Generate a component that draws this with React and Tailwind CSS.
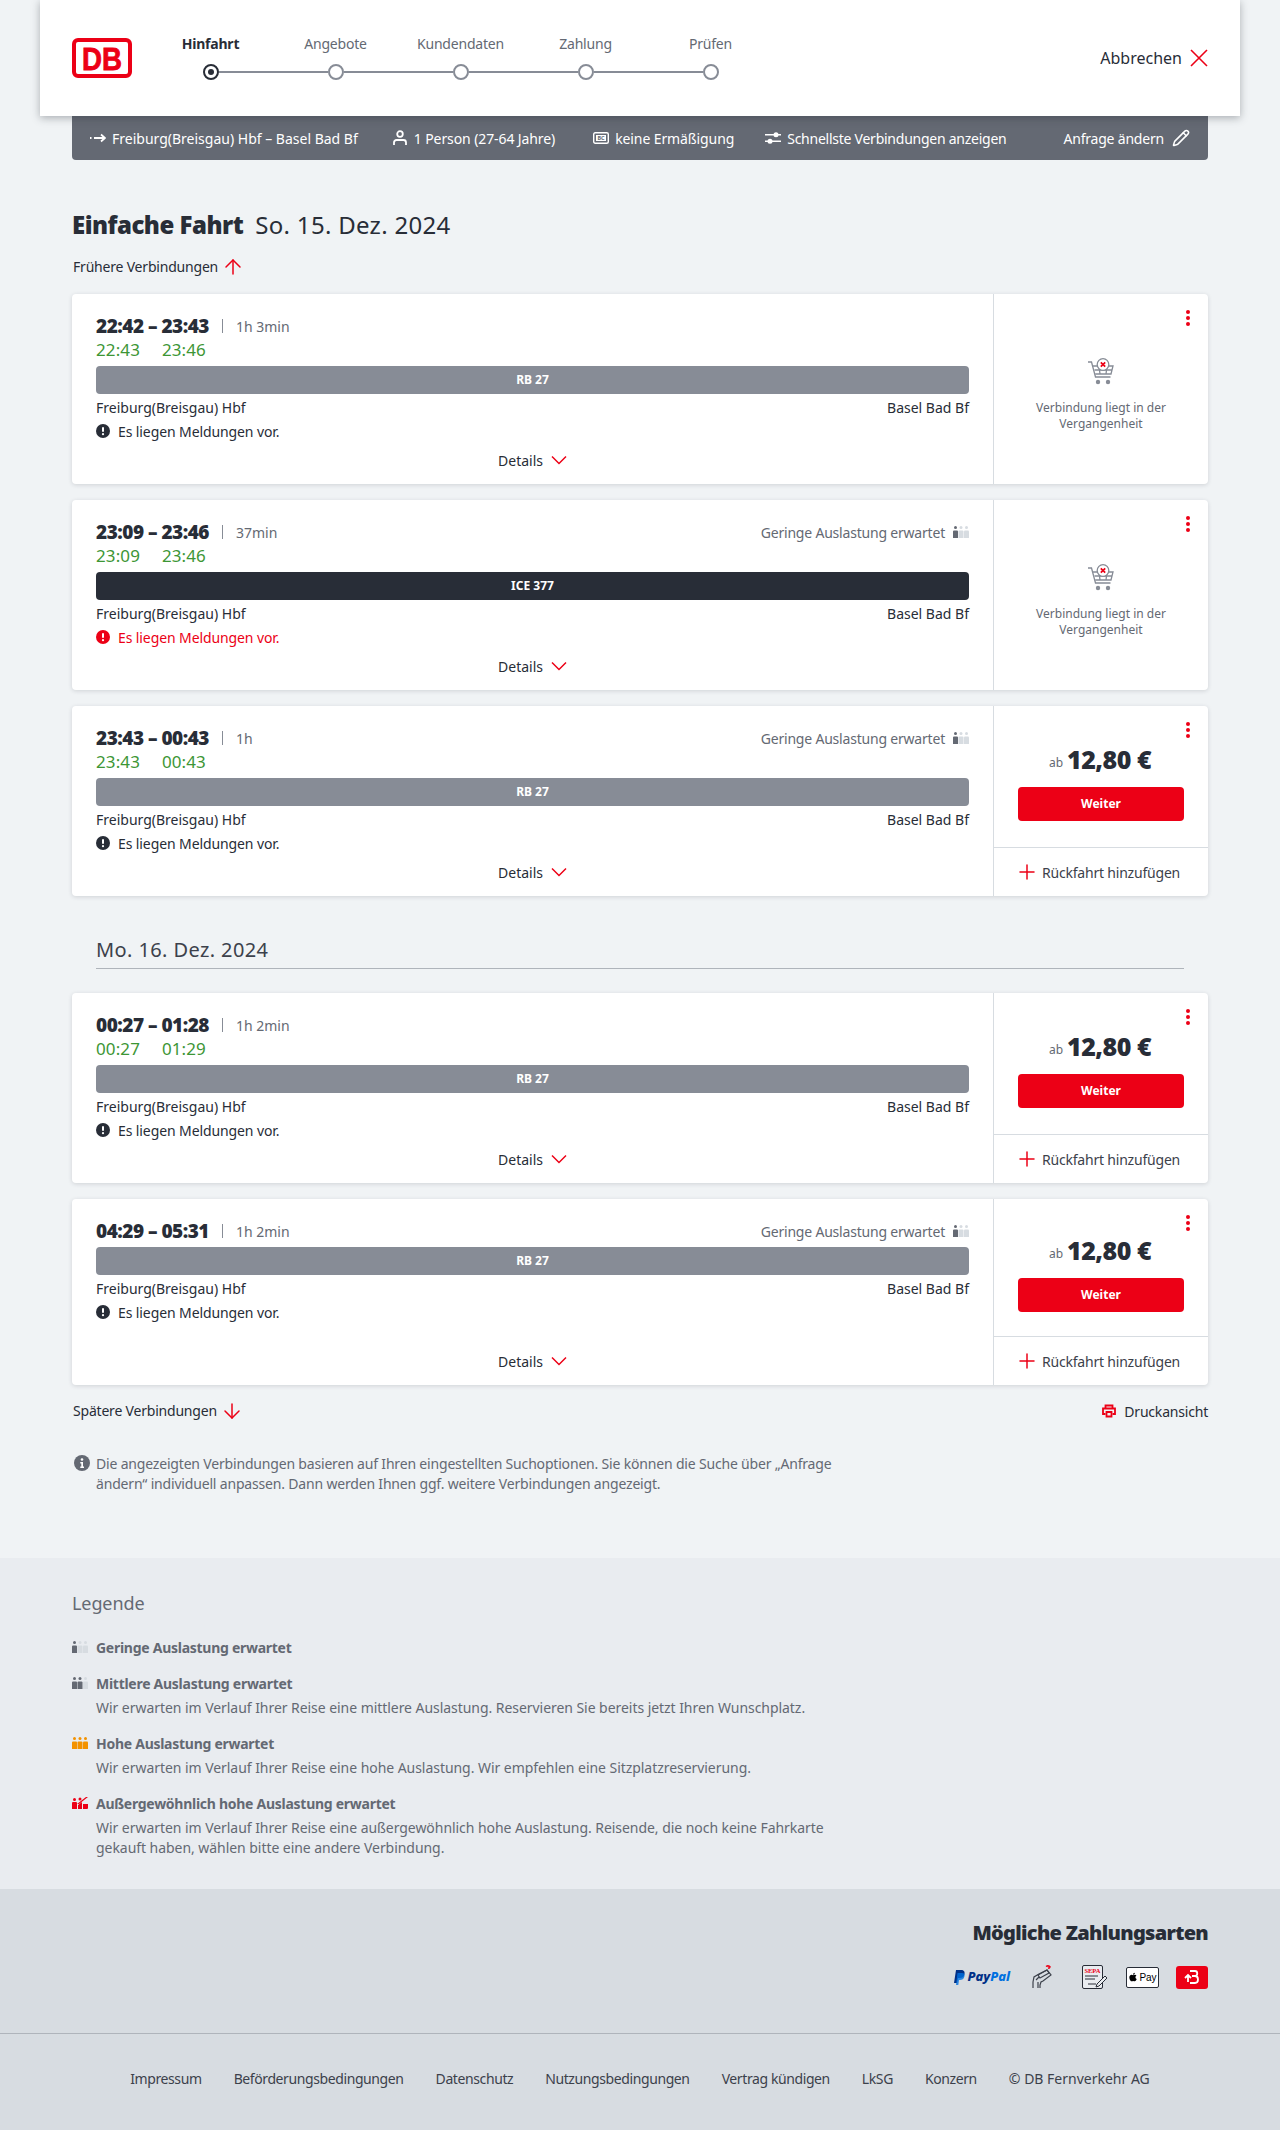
import React from 'react';
import { ArrowUp, ArrowDown, Pencil, Plus } from 'lucide-react';
import { FaApple } from 'react-icons/fa';

const steps = ['Hinfahrt', 'Angebote', 'Kundendaten', 'Zahlung', 'Prüfen'];

const DbLogo = () => (
  <svg width="60" height="40" viewBox="0 0 60 40">
    <rect x="2" y="2" width="56" height="36" rx="4" fill="#fff" stroke="#ec0016" strokeWidth="4" />
    <text x="30" y="31.500" textAnchor="middle" fontFamily="Liberation Sans" fontWeight="700" fontSize="32" fill="#ec0016" stroke="#ec0016" strokeWidth="0.800" textLength="40" lengthAdjust="spacingAndGlyphs">DB</text>
  </svg>
);

const Chevron = () => (
  <svg width="16" height="10" viewBox="0 0 16 10" fill="none" stroke="#ec0016" strokeWidth="1.5">
    <path d="M1 1.5 8 8.5 15 1.5" />
  </svg>
);

const Occupancy = ({ colors }) => (
  <svg width="16" height="12" viewBox="0 0 16 12">
    {colors.map((c, i) => (
      <g key={i} fill={c}>
        <circle cx={2.5 + i * 5.5} cy="1.5" r="1.5" />
        <path d={`M${i * 5.5} 5.5a1 1 0 0 1 1-1h3a1 1 0 0 1 1 1V12H${i * 5.5}z`} />
      </g>
    ))}
  </svg>
);

const LOW = ['#646973', '#d7dce1', '#d7dce1'];
const MID = ['#646973', '#646973', '#d7dce1'];
const HIGH = ['#f39200', '#f39200', '#f39200'];

const Overbooked = () => (
  <svg width="16" height="12" viewBox="0 0 16 12">
    <g fill="#ec0016">
      <circle cx="2.5" cy="2.5" r="1.5" />
      <path d="M0 6a1 1 0 0 1 1-1h3a1 1 0 0 1 1 1v6H0z" />
      <path d="M6 12V8l4-3v7zM11 12V7h5v4a1 1 0 0 1-1 1z" />
      <path d="M14 0h2L7 7H5z" />
      <circle cx="8" cy="2" r="1.5" />
    </g>
  </svg>
);

const Cart = () => (
  <svg width="28" height="28" viewBox="0 0 28 28" fill="none" stroke="#878c96" strokeWidth="1.300">
    <path d="M1 4h3.500l4 15h15" />
    <path d="M6 8h20l-2 8H8.200M7.500 12h17.500M12 8l1 8M20 8l-1 8" />
    <circle cx="16" cy="6.500" r="5.800" fill="#fff" />
    <path d="M13.800 4.300l4.400 4.400M18.200 4.300l-4.400 4.400" stroke="#ec0016" strokeWidth="1.700" />
    <circle cx="11" cy="24" r="2.200" fill="#878c96" stroke="none" />
    <circle cx="21" cy="24" r="2.200" fill="#878c96" stroke="none" />
  </svg>
);

const Notice = ({ red }) => (
  <svg width="14" height="14" viewBox="0 0 14 14">
    <circle cx="7" cy="7" r="7" fill={red ? '#ec0016' : '#282d37'} />
    <rect x="6" y="3" width="2" height="5" rx="1" fill="#fff" />
    <circle cx="7" cy="10.200" r="1.100" fill="#fff" />
  </svg>
);

const Dots = () => (
  <div className="absolute top-[16px] right-[18px] flex flex-col gap-[2px]">
    <span className="w-[4px] h-[4px] rounded-full bg-[#ec0016]" />
    <span className="w-[4px] h-[4px] rounded-full bg-[#ec0016]" />
    <span className="w-[4px] h-[4px] rounded-full bg-[#ec0016]" />
  </div>
);

const Card = ({ time, duration, live, train, dark, occupancy, redNotice, past }) => (
  <div className="flex rounded bg-white shadow-[0_1px_4px_rgba(40,45,55,0.16)]">
    {/* Left part */}
    <div className="w-[922px] flex flex-col border-r border-[#d7dce1] px-[24px] pt-[20px] pb-[10px]">
      <div className="flex items-center h-[24px]">
        <span className="text-[19px] font-black tracking-[-0.5px] text-[#282d37]">{time}</span>
        <span className="ml-[13px] w-px h-[14px] bg-[#878c96]" />
        <span className="ml-[13px] text-[14px] text-[#646973]">{duration}</span>
        {occupancy && (
          <div className="ml-auto flex items-center gap-[8px]">
            <span className="text-[14px] tracking-[-0.2px] text-[#646973]">Geringe Auslastung erwartet</span>
            <Occupancy colors={LOW} />
          </div>
        )}
      </div>
      {live && (
        <div className="flex h-[24px] items-center gap-[22px] text-[17px] tracking-[0.1px] text-[#3d9635]">
          <span>{live[0]}</span>
          <span>{live[1]}</span>
        </div>
      )}
      <div className={`mt-[4px] h-[28px] rounded flex items-center justify-center text-[12px] font-bold text-white ${dark ? 'bg-[#282d37]' : 'bg-[#878c96]'}`}>
        {train}
      </div>
      <div className="mt-[2px] mb-[2px] flex h-[22px] items-center justify-between text-[14px] text-[#282d37]">
        <span>Freiburg(Breisgau) Hbf</span>
        <span>Basel Bad Bf</span>
      </div>
      <div className={`mb-[2px] flex h-[22px] items-center gap-[8px] text-[14px] tracking-[-0.1px] ${redNotice ? 'text-[#ec0016]' : 'text-[#282d37]'}`}>
        <Notice red={redNotice} />
        <span>Es liegen Meldungen vor.</span>
      </div>
      <div className="mt-auto pt-[4px] pb-[2px]">
        <div className="flex h-[24px] items-center justify-center gap-[8px] text-[14px] text-[#282d37]">
          <span>Details</span>
          <Chevron />
        </div>
      </div>
    </div>

    {/* Right part */}
    <div className="relative w-[214px] flex flex-col">
      <Dots />
      {past ? (
        <div className="flex-1 flex flex-col items-center pt-[64px]">
          <Cart />
          <p className="mt-[14px] w-[160px] text-center text-[12px] leading-[16px] text-[#646973]">Verbindung liegt in der Vergangenheit</p>
        </div>
      ) : (
        <>
          <div className="flex-1 flex flex-col justify-center px-[24px] py-[24px]">
            <div className="h-[55px] flex items-center justify-center gap-[4px] pr-[2px]">
              <span className="mt-[6px] text-[12px] text-[#646973]">ab</span>
              <span className="text-[25px] font-black tracking-[-0.5px] text-[#282d37]">12,80 €</span>
            </div>
            <div className="h-[34px] rounded bg-[#ec0016] flex items-center justify-center text-[12px] font-bold text-white">Weiter</div>
          </div>
          <div className="h-[49px] border-t border-[#d7dce1] flex items-center justify-center gap-[3px] pr-[7px] text-[14px] tracking-[-0.2px] text-[#3c414b]">
            <Plus size={24} strokeWidth={1.5} color="#ec0016" />
            <span>Rückfahrt hinzufügen</span>
          </div>
        </>
      )}
    </div>
  </div>
);

const LegendItem = ({ icon, title, children }) => (
  <div>
    <div className="mb-[2px] flex items-center h-[22px] gap-[8px] text-[14px] font-bold tracking-[-0.27px] text-[#646973]">
      <span className="w-[16px] flex">{icon}</span>
      <span>{title}</span>
    </div>
    {children && <p className="mt-[4px] pl-[24px] text-[14px] leading-[20px] tracking-[-0.05px] text-[#646973]">{children}</p>}
  </div>
);

export default function App() {
  return (
    <div className="min-h-[2130px] bg-[#f0f3f5] font-['Noto_Sans',sans-serif] text-[#282d37]">
      {/* Header */}
      <header className="relative z-10 mx-[40px] h-[116px] bg-white px-[32px] flex items-center shadow-[0_2px_8px_rgba(40,45,55,0.35)]">
        <DbLogo />
        <div className="ml-[16px] flex">
          {steps.map((s, i) => (
            <div key={s} className="w-[125px] -mt-[2px]">
              <div className={`text-center text-[14px] h-[20px] leading-[20px] tracking-[-0.2px] ${i === 0 ? 'font-bold text-[#282d37]' : 'text-[#646973]'}`}>{s}</div>
              <div className="mt-[10px] flex items-center">
                <span className={`flex-1 h-[2px] ${i === 0 ? '' : 'bg-[#878c96]'}`} />
                <span className={`w-[16px] h-[16px] rounded-full border-2 bg-white flex items-center justify-center ${i === 0 ? 'border-[#282d37]' : 'border-[#878c96]'}`}>
                  {i === 0 && <span className="w-[6px] h-[6px] rounded-full bg-[#282d37]" />}
                </span>
                <span className={`flex-1 h-[2px] ${i === 4 ? '' : 'bg-[#878c96]'}`} />
              </div>
            </div>
          ))}
        </div>
        <div className="ml-auto flex items-center gap-[8px] text-[16px] text-[#282d37]">
          <span>Abbrechen</span>
          <svg width="18" height="18" viewBox="0 0 18 18" fill="none" stroke="#ec0016" strokeWidth="1.600">
            <path d="M1 1l16 16M17 1L1 17" />
          </svg>
        </div>
      </header>

      {/* Search summary */}
      <div className="mx-[72px] h-[44px] rounded-b bg-[#646973] px-[18px] flex items-center text-[14px] text-white">
        <svg width="16" height="10" viewBox="0 0 16 10" fill="none" stroke="#fff" strokeWidth="1.800">
          <path d="M0 5h1.500M4 5h11M11 1.500 15 5l-4 3.500" />
        </svg>
        <span className="ml-[6px]">Freiburg(Breisgau) Hbf – Basel Bad Bf</span>
        <svg className="ml-[34px]" width="16" height="16" viewBox="0 0 16 16" fill="none" stroke="#fff" strokeWidth="1.800">
          <circle cx="8" cy="4" r="2.800" />
          <path d="M2 15v-2.500A2.500 2.500 0 0 1 4.500 10h7A2.500 2.500 0 0 1 14 12.500V15" />
        </svg>
        <span className="ml-[6px] tracking-[-0.1px]">1 Person (27-64 Jahre)</span>
        <svg className="ml-[38px]" width="16" height="12" viewBox="0 0 16 12">
          <rect x="0.700" y="0.700" width="14.600" height="10.600" rx="1.500" fill="none" stroke="#fff" strokeWidth="1.400" />
          <rect x="3" y="3" width="10" height="6" fill="#fff" />
          <text x="8" y="8" textAnchor="middle" fontSize="5.500" fontWeight="700" fill="#646973">BC</text>
        </svg>
        <span className="ml-[6px] tracking-[-0.1px]">keine Ermäßigung</span>
        <svg className="ml-[31px]" width="16" height="12" viewBox="0 0 16 12" fill="#fff">
          <rect x="0" y="2" width="16" height="1.500" />
          <rect x="0" y="8.500" width="16" height="1.500" />
          <circle cx="11" cy="2.700" r="2.500" />
          <circle cx="5" cy="9.200" r="2.500" />
        </svg>
        <span className="ml-[6px] tracking-[-0.25px]">Schnellste Verbindungen anzeigen</span>
        <div className="ml-auto flex items-center gap-[8px]">
          <span className="tracking-[-0.2px]">Anfrage ändern</span>
          <Pencil size={18} strokeWidth={2} />
        </div>
      </div>

      {/* Results */}
      <main className="mx-[72px] pt-[50px]">
        <h1 className="h-[30px] flex items-center gap-[12px] text-[24px]">
          <span className="font-black tracking-[-0.5px]">Einfache Fahrt</span>
          <span className="tracking-[0.3px]">So. 15. Dez. 2024</span>
        </h1>
        <div className="mt-[17px] h-[20px] flex items-center gap-[3px] text-[14px] tracking-[-0.2px] pl-px">
          <span className="-mt-[1px]">Frühere Verbindungen</span>
          <ArrowUp size={24} strokeWidth={1.5} color="#ec0016" />
        </div>

        <div className="mt-[17px] flex flex-col gap-[16px]">
          <Card time="22:42 – 23:43" duration="1h 3min" live={['22:43', '23:46']} train="RB 27" past />
          <Card time="23:09 – 23:46" duration="37min" live={['23:09', '23:46']} train="ICE 377" dark occupancy redNotice past />
          <Card time="23:43 – 00:43" duration="1h" live={['23:43', '00:43']} train="RB 27" occupancy />
        </div>

        <div className="mx-[24px] mt-[37px] h-[36px] flex items-center border-b border-[#afb4bb] text-[20px] tracking-[0.4px] text-[#3c414b]">
          <span className="-mt-[2px]">Mo. 16. Dez. 2024</span>
        </div>

        <div className="mt-[24px] flex flex-col gap-[16px]">
          <Card time="00:27 – 01:28" duration="1h 2min" live={['00:27', '01:29']} train="RB 27" />
          <Card time="04:29 – 05:31" duration="1h 2min" train="RB 27" occupancy />
        </div>

        <div className="mt-[16px] h-[20px] flex items-center justify-between text-[14px] tracking-[-0.2px] pl-px">
          <div className="flex items-center gap-[3px]">
            <span className="-mt-[1px]">Spätere Verbindungen</span>
            <ArrowDown size={24} strokeWidth={1.5} color="#ec0016" />
          </div>
          <div className="flex items-center gap-[8px]">
            <svg width="14" height="14" viewBox="0 0 14 14" fill="none" stroke="#ec0016" strokeWidth="1.800">
              <path d="M3.500 4V1.500h7V4M3.500 10H1V4.500h12V10h-2.500" />
              <path d="M4.500 8h5v4.500h-5z" />
            </svg>
            <span>Druckansicht</span>
          </div>
        </div>

        <div className="mt-[33px] flex gap-[6px] text-[14px] leading-[20px] tracking-[-0.18px] text-[#646973]">
          <svg className="mt-[1px] ml-[2px] shrink-0" width="16" height="16" viewBox="0 0 16 16">
            <circle cx="8" cy="8" r="8" fill="#646973" />
            <circle cx="8" cy="4.500" r="1.300" fill="#fff" />
            <path d="M6.300 7h2.700v4.500h1V13H6.300v-1.500h1V8.500h-1z" fill="#fff" />
          </svg>
          <p>
            Die angezeigten Verbindungen basieren auf Ihren eingestellten Suchoptionen. Sie können die Suche über „Anfrage
            <br />
            ändern“ individuell anpassen. Dann werden Ihnen ggf. weitere Verbindungen angezeigt.
          </p>
        </div>
      </main>

      {/* Legend */}
      <section className="mt-[64px] h-[331px] bg-[#e9ecf0] px-[72px] pt-[31px]">
        <h2 className="h-[28px] flex items-center text-[18px] tracking-[-0.1px] text-[#646973]">Legende</h2>
        <div className="mt-[19px] flex flex-col gap-[14px]">
          <div className="-mb-[2px]">
            <LegendItem icon={<Occupancy colors={LOW} />} title="Geringe Auslastung erwartet" />
          </div>
          <LegendItem icon={<Occupancy colors={MID} />} title="Mittlere Auslastung erwartet">
            Wir erwarten im Verlauf Ihrer Reise eine mittlere Auslastung. Reservieren Sie bereits jetzt Ihren Wunschplatz.
          </LegendItem>
          <LegendItem icon={<Occupancy colors={HIGH} />} title="Hohe Auslastung erwartet">
            Wir erwarten im Verlauf Ihrer Reise eine hohe Auslastung. Wir empfehlen eine Sitzplatzreservierung.
          </LegendItem>
          <LegendItem icon={<Overbooked />} title="Außergewöhnlich hohe Auslastung erwartet">
            Wir erwarten im Verlauf Ihrer Reise eine außergewöhnlich hohe Auslastung. Reisende, die noch keine Fahrkarte
            <br />
            gekauft haben, wählen bitte eine andere Verbindung.
          </LegendItem>
        </div>
      </section>

      {/* Payment */}
      <section className="h-[145px] bg-[#d7dce1] px-[72px] pt-[29px] border-b border-[#afb4bb]">
        <h2 className="h-[30px] flex items-center justify-end text-[20px] font-black tracking-[-0.7px] text-[#282d37]">Mögliche Zahlungsarten</h2>
        <div className="mt-[17px] h-[24px] flex items-center justify-end">
          <div className="flex items-center gap-[2px] italic font-extrabold text-[13px]">
            <svg width="11" height="15" viewBox="0 0 11 15">
              <path d="M2 0h5c3 0 4 2 3.500 4C10 7 8 8 6 8H4l-1 5H0z" fill="#003087" />
              <path d="M3.500 3H8c2 0 3 1 2.500 3C10 9 8 10 6 10H5l-.7 5H2z" fill="#0070e0" opacity="0.8" />
            </svg>
            <span className="text-[#003087]">Pay</span>
            <span className="-ml-[2px] text-[#0070e0]">Pal</span>
          </div>
          <svg className="ml-[20px]" width="24" height="24" viewBox="0 0 24 24" fill="none" stroke="#3c414b" strokeWidth="1.200">
            <path d="M3 23v-6l1-5 5-3 8-4 4 5-8 6-2 1-1 3v3" />
            <path d="M8 10l9-5 2 3-9 5zM6 15l3-3M8 23v-6" />
            <path d="M16 1.500c1.500-1 3.500-.5 4.500 1M18 3.200c.7-.3 1.200-.1 1.600.5" stroke="#ec0016" strokeWidth="1.500" />
          </svg>
          <svg className="ml-[28px]" width="26" height="24" viewBox="0 0 26 24">
            <rect x="0.500" y="0.500" width="20" height="23" rx="1.500" fill="#e9ecf0" stroke="#282d37" />
            <text x="10.500" y="8" textAnchor="middle" fontFamily="Liberation Serif" fontSize="6.500" fontWeight="700" fill="#ec0016">SEPA</text>
            <path d="M3 11h13M3 14h10M6 19h8" stroke="#282d37" />
            <path d="M15 19l8-8 2 2-8 8-3 1z" fill="#e9ecf0" stroke="#282d37" />
          </svg>
          <div className="ml-[18px] w-[33px] h-[21px] rounded-[2px] bg-white border border-[#282d37] flex items-center justify-center gap-px text-[10px] font-medium text-black font-['Liberation_Sans',sans-serif]">
            <FaApple size={10} />
            <span>Pay</span>
          </div>
          <div className="ml-[17px] w-[32px] h-[23px] rounded-[3px] bg-[#ec0016] flex items-center justify-center">
            <svg width="16" height="16" viewBox="0 0 16 16" fill="none" stroke="#fff" strokeWidth="1.800">
              <path d="M6 2h5c3 0 3 5 0 5H8M8 7h3c4 0 4 7 0 7H6" />
              <path d="M1 9l3-3 3 3M4 7v6" />
            </svg>
          </div>
        </div>
      </section>

      {/* Footer */}
      <footer className="h-[96px] bg-[#d7dce1] pt-[35px] flex justify-center gap-[32px] text-[14px] leading-[20px] tracking-[-0.4px] text-[#3c414b]">
        <span>Impressum</span>
        <span>Beförderungsbedingungen</span>
        <span>Datenschutz</span>
        <span>Nutzungsbedingungen</span>
        <span>Vertrag kündigen</span>
        <span>LkSG</span>
        <span>Konzern</span>
        <span className="tracking-normal">© DB Fernverkehr AG</span>
      </footer>
    </div>
  );
}
